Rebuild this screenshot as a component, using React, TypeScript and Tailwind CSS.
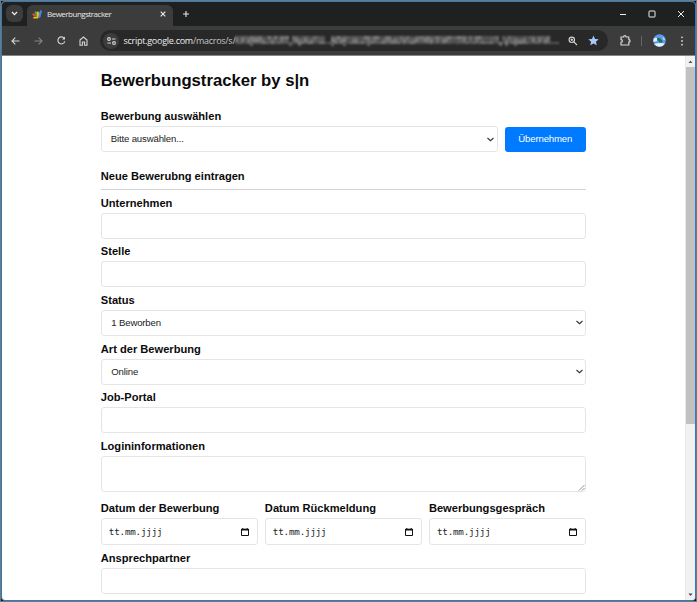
import React from "react";

const shades = ["#6a6a6a", "#565656", "#787878", "#606060", "#4c4c4c", "#808080", "#5c5c5c", "#707070", "#525252"];

function RedactedPath() {
  const cells: React.ReactElement[] = [];
  for (let i = 0; i < 108; i++) {
    for (let r = 0; r < 3; r++) {
      const n = (i * 7 + r * 5 + ((i * i) % 11)) % 9;
      const gap = i === 18 || i === 30 || i === 31 || i === 88;
      const end = i > 104;
      if ((gap || end) && r < 2) continue;
      cells.push(<rect key={`${i}-${r}`} x={i * 3} y={2 + r * 3} width="3" height={r === 2 ? 2 : 3} fill={shades[n]} />);
    }
    if (i === 5 || i === 18 || i === 21 || i === 32 || i === 36 || i === 44 || i === 88 || i === 90 || i === 93) {
      cells.push(<rect key={`d-${i}`} x={i * 3} y="10" width="3" height="2" fill="#666" />);
    }
  }
  return (
    <svg width="324" height="13" viewBox="0 0 324 13" className="shrink-0 blur-[0.9px]">
      {cells}
    </svg>
  );
}

function Chevron() {
  return (
    <svg width="7" height="5" viewBox="0 0 7 5" fill="none" stroke="#333" strokeWidth="1.1" className="shrink-0">
      <path d="M0.5 1 L3.5 3.7 L6.5 1" />
    </svg>
  );
}

function Calendar() {
  return (
    <svg width="8" height="8" viewBox="0 0 8 8" className="shrink-0">
      <path d="M0.5 1.2H7.5V7.5H0.5Z" fill="none" stroke="#111" />
      <path d="M0 1H8V2.6H0ZM1.3 0H2.3V1H1.3ZM5.7 0H6.7V1H5.7Z" fill="#111" />
    </svg>
  );
}

const labelCls = "flex items-end text-[11.12px] leading-[13px] font-bold whitespace-nowrap";
const boxCls = "flex shrink-0 items-center rounded-[3px] border border-[#e5e5e5] bg-white text-[9.6px] tracking-[-0.16px] text-[#222]";

function Field({ label, value }: { label: string; value?: string }) {
  return (
    <div className="flex h-[48.67px] shrink-0 flex-col">
      <div className={`${labelCls} h-[22.67px] pb-[3px]`}>{label}</div>
      <div className={`${boxCls} h-[26px] justify-between pr-[2.5px] pl-[9.5px]`}>
        {value && <span className="pt-px">{value}</span>}
        {value && <Chevron />}
      </div>
    </div>
  );
}

function DateField({ label }: { label: string }) {
  return (
    <div className="flex min-w-0 flex-1 flex-col">
      <div className={`${labelCls} h-[26px] pb-[3px]`}>{label}</div>
      <div className={`${boxCls} h-[27px] justify-between pr-[8px] pl-[7px]`}>
        <span className="font-['DejaVu_Sans_Mono',monospace] text-[9.2px] tracking-[-0.17px]">tt.mm.jjjj</span>
        <Calendar />
      </div>
    </div>
  );
}

function TabStrip() {
  return (
    <div className="flex h-[24px] shrink-0 items-end bg-[#1f2120] pl-[4px]">
      <div className="mb-[4px] flex h-[17px] w-[17px] items-center justify-center rounded-[6px] bg-[#3c3c3c]">
        <svg width="7" height="5" viewBox="0 0 7 5" fill="none" stroke="#f0f0f0" strokeWidth="1.3">
          <path d="M1 1L3.5 3.6L6 1" />
        </svg>
      </div>
      <div className="ml-[4px] flex h-[21px] w-[146px] items-center rounded-t-[6px] bg-[#3c3c3c] pb-[3px] pl-[5px]">
        <svg width="10" height="9" viewBox="0 0 10 9" className="shrink-0">
          <g strokeLinecap="round" strokeWidth="2.2" fill="none">
            <path d="M1.4 4.4L4.5 7" stroke="#ea4335" />
            <path d="M3.6 2.3L5.2 6.6" stroke="#34a853" />
            <path d="M5.8 2.5L6.2 6.4" stroke="#fbbc04" />
            <path d="M8.8 1.3L7.4 6.6" stroke="#4285f4" />
            <path d="M1.8 7.8H5.6" stroke="#fbbc04" strokeWidth="1.4" />
          </g>
        </svg>
        <span className="ml-[5px] text-[8px] leading-[12px] tracking-[-0.5px] text-[#e6e6e6]">Bewerbungstracker</span>
        <svg width="6" height="6" viewBox="0 0 6 6" stroke="#eee" strokeWidth="1.1" className="mr-[7px] ml-auto">
          <path d="M0.7 0.7L5.3 5.3M5.3 0.7L0.7 5.3" />
        </svg>
      </div>
      <svg width="8" height="8" viewBox="0 0 8 8" stroke="#e6e6e6" strokeWidth="1.1" className="mb-[8px] ml-[9px]">
        <path d="M1 4H7M4 1V7" />
      </svg>
      <div className="mr-[10px] mb-[8px] ml-auto flex items-center gap-[21px]">
        <svg width="8" height="8" viewBox="0 0 8 8" stroke="#eee"><path d="M1 4.5H7" /></svg>
        <svg width="8" height="8" viewBox="0 0 8 8" stroke="#eee" fill="none"><rect x="1" y="1" width="6" height="6" rx="0.5" /></svg>
        <svg width="8" height="8" viewBox="0 0 8 8" stroke="#eee"><path d="M1 1L7 7M7 1L1 7" /></svg>
      </div>
    </div>
  );
}

function Toolbar() {
  return (
    <div className="flex h-[29px] shrink-0 items-center bg-[#3c3c3c] pl-[9px]">
      <svg width="9" height="8" viewBox="0 0 9 8" fill="none" stroke="#d5d5d5" strokeWidth="1.1"><path d="M8.5 4H1M4.3 0.7L1 4L4.3 7.3" /></svg>
      <svg width="9" height="8" viewBox="0 0 9 8" fill="none" stroke="#858585" strokeWidth="1.1" className="ml-[14px]"><path d="M0.5 4H8M4.7 0.7L8 4L4.7 7.3" /></svg>
      <svg width="9" height="9" viewBox="0 0 9 9" fill="none" stroke="#d5d5d5" strokeWidth="1.1" className="ml-[14px]">
        <path d="M7.8 5.3A3.5 3.5 0 1 1 7.2 2.3" />
        <path d="M8 0.6V3.6H5Z" fill="#d5d5d5" stroke="none" />
      </svg>
      <svg width="9" height="10" viewBox="0 0 9 10" fill="none" stroke="#d5d5d5" strokeWidth="1.1" className="ml-[13px]">
        <path d="M1 4L4.5 1L8 4V9.2H5.6V6H3.4V9.2H1Z" />
      </svg>
      <div className="ml-[12px] flex h-[21px] w-[508px] shrink-0 items-center rounded-full bg-[#282828] pl-[3px]">
        <div className="flex h-[16px] w-[16px] shrink-0 items-center justify-center rounded-full bg-[#3c3c3c]">
          <svg width="9" height="8" viewBox="0 0 9 8" fill="none" stroke="#d5d5d5" strokeWidth="1.1">
            <circle cx="2" cy="2" r="1.4" />
            <path d="M5 2H8.5M0.5 6H4" />
            <circle cx="7" cy="6" r="1.4" />
          </svg>
        </div>
        <div className="ml-[4.5px] w-[111px] shrink-0 text-[9px] leading-[13px] tracking-[-0.27px] whitespace-nowrap text-[#ececec]">
          script.google.com<span className="text-[#c4c4c4]">/macros/s/</span>
        </div>
        <RedactedPath />
        <svg width="10" height="10" viewBox="0 0 10 10" fill="none" stroke="#d5d5d5" strokeWidth="1.1" className="ml-[9px] shrink-0">
          <circle cx="3.8" cy="3.8" r="2.7" />
          <path d="M5.8 5.8L9 9M2.5 3.8H5.1M3.8 2.5V5.1" />
        </svg>
        <svg width="11" height="11" viewBox="0 0 11 11" fill="#a8c7fa" className="ml-[10px] shrink-0">
          <path d="M5.5 0.5L7 3.9L10.7 4.2L7.9 6.7L8.8 10.3L5.5 8.4L2.2 10.3L3.1 6.7L0.3 4.2L4 3.9Z" />
        </svg>
      </div>
      <svg width="11" height="11" viewBox="0 0 11 11" fill="none" stroke="#d5d5d5" strokeWidth="1.2" className="ml-[12px] shrink-0">
        <path d="M1 2H3.6A1.3 1.3 0 0 1 6.2 2H8.8V4.6A1.3 1.3 0 0 1 8.8 7.2V10H1V7.4A1.4 1.4 0 0 0 1 4.6Z" />
      </svg>
      <div className="ml-[10px] h-[10px] w-px shrink-0 bg-[#666]" />
      <svg width="13" height="13" viewBox="0 0 13 13" className="ml-[11px] shrink-0">
        <circle cx="6.5" cy="6.5" r="6.3" fill="#5b9cf0" />
        <path d="M0.5 5Q2.5 2.6 4.4 4.4L4 7L0.4 8ZM1 10Q6 8.4 12 9.4Q9.6 12.8 6.5 12.8Q3 12.6 1 10ZM9.6 3L11.4 4.5L12 6L10.4 5.4Z" fill="#e8f1fa" />
        <path d="M4 4.3Q6 3 8 5.2L9.8 7.2L9 8.4L6 8.8L6 7.2L4 6Z" fill="#1c7356" />
      </svg>
      <svg width="4" height="10" viewBox="0 0 4 10" fill="#d5d5d5" className="ml-[14px] shrink-0">
        <circle cx="2" cy="1.3" r="0.9" /><circle cx="2" cy="5" r="0.9" /><circle cx="2" cy="8.7" r="0.9" />
      </svg>
    </div>
  );
}

export default function App() {
  return (
    <div className="h-[602px] w-[697px] overflow-hidden border border-[#74777a] bg-[#101820] font-['Open_Sans',sans-serif]">
      <div className="flex h-[600px] w-[695px] flex-col overflow-hidden rounded-[4px] border border-[#2b7fc0] bg-white">
        <TabStrip />
        <Toolbar />
        <div className="h-px shrink-0 bg-[#858585]" />
        <div className="flex min-h-0 flex-1">
          <main className="flex min-w-0 flex-1 flex-col pr-[99px] pl-[98.8px] font-['Liberation_Sans',Arial,sans-serif] text-[#0b0b0b]">
            <h1 className="mt-[14px] h-[22px] shrink-0 text-[16.68px] leading-[22px] font-bold">Bewerbungstracker by s|n</h1>
            <div className={`${labelCls} mt-[18px] h-[13px] shrink-0`}>Bewerbung auswählen</div>
            <div className="mt-[3px] flex h-[26px] shrink-0 gap-[7px]">
              <div className={`${boxCls} flex-1 justify-between pr-[2.5px] pl-[9px]`}>
                <span className="pt-px">Bitte auswählen...</span>
                <Chevron />
              </div>
              <button className="mt-px h-[25px] w-[81.5px] rounded-[3px] bg-[#007bff] text-[9.6px] tracking-[-0.16px] text-white">Übernehmen</button>
            </div>
            <div className={`${labelCls} mt-[18px] h-[13px] shrink-0`}>Neue Bewerubng eintragen</div>
            <div className="mt-[6px] h-px shrink-0 bg-[#d4d4d4]" />
            <Field label="Unternehmen" />
            <Field label="Stelle" />
            <Field label="Status" value="1 Beworben" />
            <Field label="Art der Bewerbung" value="Online" />
            <Field label="Job-Portal" />
            <div className={`${labelCls} h-[22.67px] shrink-0 pb-[2.5px]`}>Logininformationen</div>
            <div className={`${boxCls} h-[36.5px] items-end justify-end`}>
              <svg width="7" height="7" viewBox="0 0 7 7" stroke="#777" strokeWidth="0.8" className="mt-auto"><path d="M1 6.5L6.5 1M4 6.5L6.5 4" /></svg>
            </div>
            <div className="flex shrink-0 gap-[7px]">
              <DateField label="Datum der Bewerbung" />
              <DateField label="Datum Rückmeldung" />
              <DateField label="Bewerbungsgespräch" />
            </div>
            <Field label="Ansprechpartner" />
          </main>
          <div className="flex w-[10px] shrink-0 flex-col items-center border-l border-[#e8e8e8] bg-[#f1f1f1]">
            <svg width="9" height="11" viewBox="0 0 9 11" fill="#555" className="shrink-0"><path d="M2.5 7L4.5 4.5L6.5 7Z" /></svg>
            <div className="h-[357px] w-full shrink-0 bg-[#c1c1c1]" />
            <svg width="9" height="10" viewBox="0 0 9 10" fill="#444" className="mt-auto shrink-0"><path d="M2.5 3.5H6.5L4.5 6Z" /></svg>
          </div>
        </div>
      </div>
    </div>
  );
}
